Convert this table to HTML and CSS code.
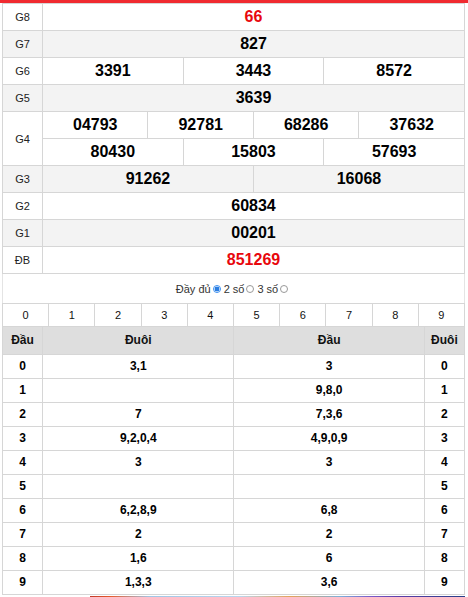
FILE: index.html
```html
<!DOCTYPE html>
<html>
<head>
<meta charset="utf-8">
<link rel="stylesheet" href="styles.css">
</head>
<body>
<div class="topbar"></div>
<div class="wrap">
  <table class="kq">
    <colgroup>
      <col class="lab">
      <col><col><col><col><col><col><col><col><col><col><col><col>
    </colgroup>
    <tr><td class="l">G8</td><td colspan="12" class="n red">66</td></tr>
    <tr class="alt"><td class="l">G7</td><td colspan="12" class="n">827</td></tr>
    <tr><td class="l">G6</td><td colspan="4" class="n">3391</td><td colspan="4" class="n">3443</td><td colspan="4" class="n">8572</td></tr>
    <tr class="alt"><td class="l">G5</td><td colspan="12" class="n">3639</td></tr>
    <tr><td class="l" rowspan="2">G4</td><td colspan="3" class="n">04793</td><td colspan="3" class="n">92781</td><td colspan="3" class="n">68286</td><td colspan="3" class="n">37632</td></tr>
    <tr><td colspan="4" class="n">80430</td><td colspan="4" class="n">15803</td><td colspan="4" class="n">57693</td></tr>
    <tr class="alt"><td class="l">G3</td><td colspan="6" class="n">91262</td><td colspan="6" class="n">16068</td></tr>
    <tr><td class="l">G2</td><td colspan="12" class="n">60834</td></tr>
    <tr class="alt"><td class="l">G1</td><td colspan="12" class="n">00201</td></tr>
    <tr><td class="l">ĐB</td><td colspan="12" class="n red">851269</td></tr>
  </table>

  <div class="opts">
    <span>Đầy đủ</span><span class="radio on"></span>
    <span>2 số</span><span class="radio"></span>
    <span>3 số</span><span class="radio"></span>
  </div>

  <div class="digits">
    <div>0</div><div>1</div><div>2</div><div>3</div><div>4</div>
    <div>5</div><div>6</div><div>7</div><div>8</div><div>9</div>
  </div>

  <table class="loto">
    <colgroup>
      <col class="c1"><col class="c2"><col class="c3"><col class="c4">
    </colgroup>
    <tr class="head"><th>Đầu</th><th>Đuôi</th><th>Đầu</th><th>Đuôi</th></tr>
    <tr><td>0</td><td>3,1</td><td>3</td><td>0</td></tr>
    <tr><td>1</td><td></td><td>9,8,0</td><td>1</td></tr>
    <tr><td>2</td><td>7</td><td>7,3,6</td><td>2</td></tr>
    <tr><td>3</td><td>9,2,0,4</td><td>4,9,0,9</td><td>3</td></tr>
    <tr><td>4</td><td>3</td><td>3</td><td>4</td></tr>
    <tr><td>5</td><td></td><td></td><td>5</td></tr>
    <tr><td>6</td><td>6,2,8,9</td><td>6,8</td><td>6</td></tr>
    <tr><td>7</td><td>2</td><td>2</td><td>7</td></tr>
    <tr><td>8</td><td>1,6</td><td>6</td><td>8</td></tr>
    <tr><td>9</td><td>1,3,3</td><td>3,6</td><td>9</td></tr>
  </table>
  <div class="ad"></div>
</div>
</body>
</html>
```

FILE: styles.css
```css
html, body {
  margin: 0;
  padding: 0;
  background: #fff;
  font-family: "Liberation Sans", Arial, sans-serif;
  color: #000;
}
.topbar {
  height: 3px;
  background: #f02a30;
}
.wrap {
  margin-left: 2px;
  width: 463px;
}
table {
  border-collapse: collapse;
  table-layout: fixed;
  width: 463px;
}
td, th {
  border: 1px solid #d6d6d6;
  padding: 0;
  text-align: center;
}
.kq col.lab { width: 40px; }
.kq tr { height: 27px; }
.kq td { height: 26px; }
.kq .alt td { background: #f3f3f3; }
.kq td.l {
  font-size: 11px;
  color: #222;
  background: #fff;
}
.kq .alt td.l { background: #f3f3f3; }
.kq td.n {
  font-size: 16px;
  font-weight: bold;
}
.kq td.red { color: #e8070d; }

.opts {
  height: 29px;
  display: flex;
  align-items: center;
  justify-content: center;
  font-size: 11px;
  color: #333;
  border-left: 1px solid #e4e4e4;
  border-right: 1px solid #e4e4e4;
  padding-top: 1px;
  box-sizing: border-box;
}
.radio {
  display: inline-block;
  width: 6px;
  height: 6px;
  border: 1px solid #999;
  border-radius: 50%;
  margin: 0 3px 0 2px;
  box-sizing: content-box;
}
.radio.on {
  border-color: #3b8ff0;
  background: radial-gradient(circle, #2a7de1 0 2.4px, #fff 2.6px);
}

.digits {
  display: grid;
  grid-template-columns: repeat(10, 1fr);
  border: 1px solid #d6d6d6;
  border-right: none;
  height: 24px;
  box-sizing: border-box;
}
.digits div {
  border-right: 1px solid #d6d6d6;
  font-size: 11px;
  display: flex;
  align-items: center;
  justify-content: center;
  color: #111;
}

.loto col.c1 { width: 40px; }
.loto col.c2 { width: 191px; }
.loto col.c3 { width: 190px; }
.loto col.c4 { width: 40px; }
.loto tr { height: 24px; }
.loto td, .loto th {
  font-size: 12px;
  font-weight: bold;
  border-top: none;
}
.loto tr.head { height: 27px; }
.loto th {
  background: #dedede;
  font-size: 12px;
  color: #111;
}
.ad {
  margin-left: 88px;
  margin-top: 1px;
  height: 4px;
  background: linear-gradient(90deg, #c0392b 0, #e65a2b 20px, #9fc6e6 60px, #b9d6ee 150px, #e3a35a 200px, #7bb0da 250px, #7a5cc8 280px, #5b3ea8 310px, #2a3f8a 370px);
}
```
